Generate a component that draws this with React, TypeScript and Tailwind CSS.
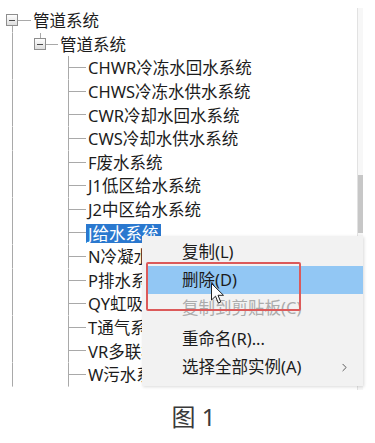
import { ChevronRight } from 'lucide-react';

const leaves = [
    'CHWR冷冻水回水系统',
    'CHWS冷冻水供水系统',
    'CWR冷却水回水系统',
    'CWS冷却水供水系统',
    'F废水系统',
    'J1低区给水系统',
    'J2中区给水系统',
    'J给水系统',
    'N冷凝水系统',
    'P排水系统',
    'QY虹吸雨水系统',
    'T通气系统',
    'VR多联机系统',
    'W污水系统',
];

const LINE = '#a9a9a9';

function ExpandBox({ x }: { x: number }) {
    return (
        <g>
            <rect x={x + 0.5} y={5.5} width={11} height={11} fill="url(#boxfill)" stroke="#8e8e8e" />
            <line x1={x + 3} y1={11.5} x2={x + 9} y2={11.5} stroke="#4a4a4a" />
        </g>
    );
}

function Defs() {
    return (
        <defs>
            <linearGradient id="boxfill" x1="0" y1="0" x2="0" y2="1">
                <stop offset="0" stopColor="#ffffff" />
                <stop offset="1" stopColor="#dcdcdc" />
            </linearGradient>
        </defs>
    );
}

function Row({ level, label, selected }: { level: 0 | 1 | 2; label: string; selected?: boolean }) {
    const width = level === 0 ? 31 : level === 1 ? 58 : 86;
    return (
        <div className="flex h-[23.6px] items-center">
            <svg width={width} height={23.6} className="shrink-0 self-stretch">
                <Defs />
                {level === 0 && (
                    <>
                        <ExpandBox x={6} />
                        <line x1={18} y1={11.5} x2={31} y2={11.5} stroke={LINE} />
                        <line x1={12.5} y1={17} x2={12.5} y2={23.6} stroke={LINE} />
                    </>
                )}
                {level === 1 && (
                    <>
                        <line x1={12.5} y1={0} x2={12.5} y2={23.6} stroke={LINE} />
                        <line x1={40.5} y1={0} x2={40.5} y2={5} stroke={LINE} />
                        <ExpandBox x={34} />
                        <line x1={46} y1={11.5} x2={58} y2={11.5} stroke={LINE} />
                    </>
                )}
                {level === 2 && (
                    <>
                        <line x1={12.5} y1={0} x2={12.5} y2={23.6} stroke={LINE} />
                        <line x1={68.5} y1={0} x2={68.5} y2={23.6} stroke={LINE} />
                        <line x1={68.5} y1={11.5} x2={86} y2={11.5} stroke={LINE} />
                    </>
                )}
            </svg>
            <span
                className={`whitespace-nowrap px-[2px] leading-[19px] ${selected ? 'bg-[#2a78cf] text-white' : 'text-[#1c1c1c]'}`}
            >
                {label}
            </span>
        </div>
    );
}

function MenuItem({ label, active, disabled, arrow }: { label: string; active?: boolean; disabled?: boolean; arrow?: boolean }) {
    return (
        <div
            className={`flex h-[28px] items-center justify-between pl-[36px] pr-[12px] ml-[4px] ${active ? 'bg-[#92c7f4]' : ''} ${disabled ? 'text-[#ababab]' : 'text-[#1c1c1c]'}`}
        >
            <span className="whitespace-nowrap">{label}</span>
            {arrow && <ChevronRight className="h-[13px] w-[13px] text-[#444]" strokeWidth={1.6} />}
        </div>
    );
}

export default function App() {
    return (
        <div
            className="relative flex h-[443px] w-[375px] flex-col overflow-hidden bg-white text-[16.5px]"
            style={{ fontFamily: '"Noto Sans", "Noto Sans CJK SC", sans-serif' }}
        >
            <div className="flex h-[390px] w-[363px]">
                <div className="flex-1 pt-[9px]">
                    <Row level={0} label="管道系统" />
                    <Row level={1} label="管道系统" />
                    {leaves.map(l => (
                        <Row key={l} level={2} label={l} selected={l === 'J给水系统'} />
                    ))}
                </div>
                {/* scrollbar */}
                <div className="mt-[8px] flex w-[6px] flex-col border-l border-[#e2e2e2] bg-[#f7f7f7]">
                    <div className="h-[167px]" />
                    <div className="h-[58px] bg-[#c7c7c7]" />
                </div>
            </div>

            <div className="flex h-[53px] items-center justify-center pl-[12px] text-[24px] text-[#3a3a3a]">
                图 1
            </div>

            {/* context menu */}
            <div className="absolute left-[142px] top-[236px] h-[150px] w-[221px] overflow-hidden bg-[#f2f2f2] pt-[2px] shadow-[1px_1px_3px_rgba(0,0,0,0.15)]">
                <MenuItem label="复制(L)" />
                <MenuItem label="删除(D)" active />
                <MenuItem label="复制到剪贴板(C)" disabled />
                <div className="h-[3px]" />
                <MenuItem label="重命名(R)..." />
                <MenuItem label="选择全部实例(A)" arrow />
                <MenuItem label="创建类似实例" />
            </div>

            {/* annotation */}
            <div className="absolute left-[146px] top-[262px] h-[49px] w-[155px] rounded-[2px] border-2 border-[#dc5a5a]" />

            {/* mouse cursor */}
            <svg className="absolute left-[211px] top-[283px]" width="14" height="22" viewBox="0 0 14 22">
                <path d="M0.5 0.5 L0.5 17 L4.5 13.2 L7.3 20 L9.8 19 L7 12.3 L12.5 12.3 Z" fill="#ffffff" stroke="#222" strokeWidth="1" strokeLinejoin="round" />
            </svg>
        </div>
    );
}
